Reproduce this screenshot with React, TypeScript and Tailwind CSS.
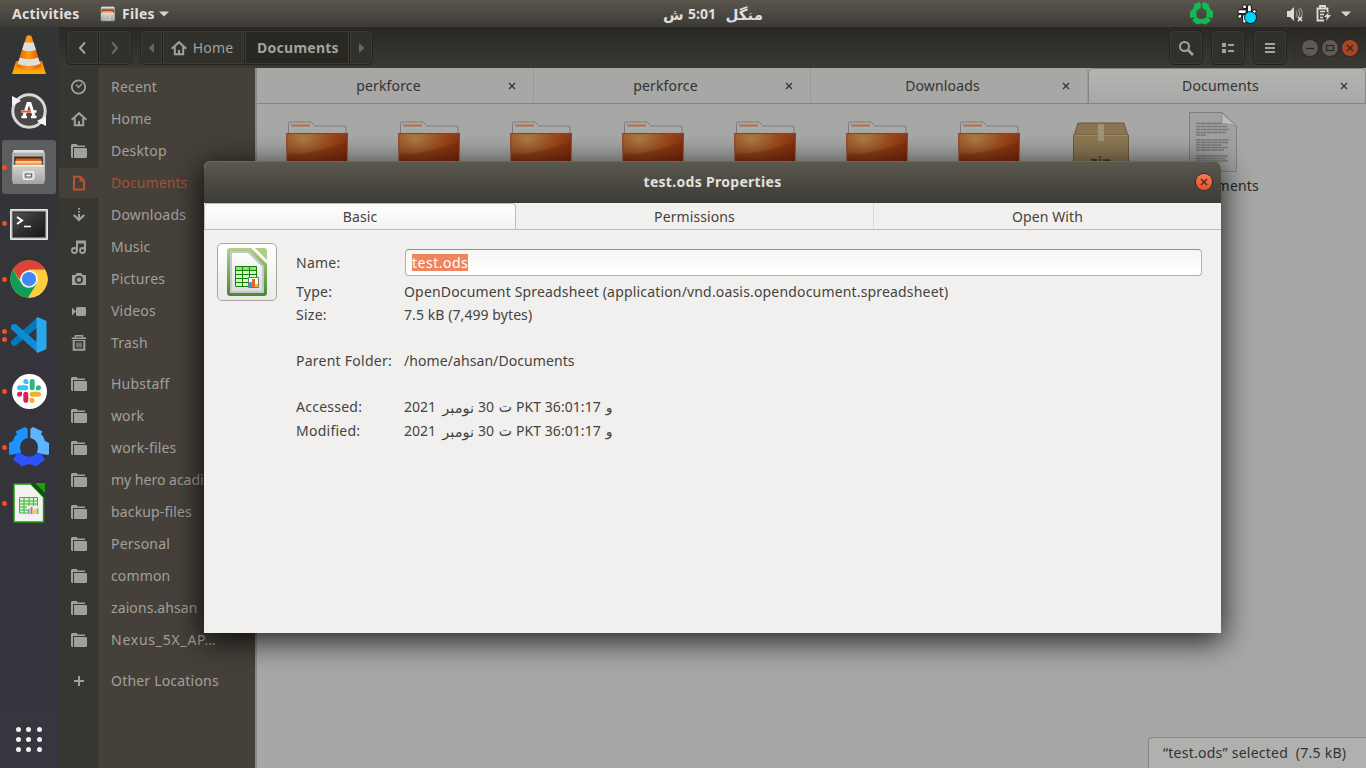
import React from 'react';

type P = { children?: React.ReactNode; className?: string };
const Svg = ({ w, h, vb, children, className = '' }: { w: number; h: number; vb?: string } & P) => (
  <svg width={w} height={h} viewBox={vb ?? `0 0 ${w} ${h}`} className={`block shrink-0 ${className}`}>{children}</svg>
);

const C = '#a0a09c';

const HomeIcon = () => (
  <Svg w={16} h={16}><path d="M.700 8.700 8 2.200l7.300 6.500M3.800 7v7.200h8.400V7" fill="none" stroke={C} strokeWidth="2" /><path d="M7 10h2v4H7z" fill={C} /></Svg>
);
const FolderIcon = () => (
  <Svg w={16} h={16}><path d="M0 2l1-1h4.500L7 2.500h7V4H2v11H1l-1-1z" fill={C} /><path d="M3 5h12l1 1v8l-1 1H3z" fill={C} /></Svg>
);
const sideIcons: Record<string, React.ReactNode> = {
  recent: <Svg w={16} h={16}><circle cx="7.500" cy="8" r="6.700" fill="none" stroke={C} strokeWidth="1.800" /><path d="M5 5.500 7.500 8.500 11 4.800" fill="none" stroke={C} strokeWidth="1.300" /></Svg>,
  home: <HomeIcon />,
  folder: <FolderIcon />,
  doc: <Svg w={16} h={16}><path d="M3 1.800h6L13 5.500v9H3z" fill="none" stroke="#b9532f" strokeWidth="2" /><path d="M8.500 1.500v5H13z" fill="#b9532f" /></Svg>,
  down: <Svg w={16} h={16}><path d="M7 1h2v1.500H7zM7 4h2v1.500H7zM7 7h2v6H7z" fill={C} /><path d="M2.800 8 8 13l5.200-5" fill="none" stroke={C} strokeWidth="2.300" /></Svg>,
  music: <Svg w={16} h={16}><path d="M6 12V2.500h8v8.500M6 3.500h8" fill="none" stroke={C} strokeWidth="2" /><circle cx="3.400" cy="11.500" r="2.500" fill="none" stroke={C} strokeWidth="1.800" /><circle cx="11.500" cy="11.500" r="2.500" fill="none" stroke={C} strokeWidth="1.800" /></Svg>,
  camera: <Svg w={16} h={16}><path d="M1 4h3.500l1-2h5l1 2H15v10H1z" fill={C} /><circle cx="8" cy="8.800" r="3.100" fill="none" stroke="#383630" strokeWidth="1.800" /></Svg>,
  video: <Svg w={16} h={16}><path d="M6 4h8l1 1v7l-1 1H6l-1-1V5zM1 4.500 5 8.500 1 12.500z" fill={C} /></Svg>,
  trash: <Svg w={16} h={16}><path d="M.700 3.200h14.600M4.500 2.500V.800h7v1.700" fill="none" stroke={C} strokeWidth="1.600" /><path d="M2.700 6v8.700h10.600V6" fill="none" stroke={C} strokeWidth="2" /><path d="M1.700 5.500h12.600M6 7.500v5M8 7.500v5M10 7.500v5" fill="none" stroke={C} strokeWidth="1.100" /></Svg>,
  plus: <Svg w={16} h={16}><path d="M8 3v10M3 8h10" stroke={C} strokeWidth="2" /></Svg>,
};

const Cabinet = ({ s }: { s: number }) => (
  <Svg w={s} h={s} vb="0 0 40 40">
    <defs><linearGradient id="cab" x2="0" y2="1"><stop stopColor="#d2d2d2" /><stop offset="1" stopColor="#a2a2a2" /></linearGradient></defs>
    <path d="M4 2h31l2 4v29H2V6z" fill="#b0b0b0" /><path d="M4 2h31l1 3H3z" fill="#dedede" />
    <path d="M4.500 9h30v10h-30z" fill="#3c2a22" /><path d="M6 11h27v3H6z" fill="#d8551e" /><path d="M5.500 13.500h28v5h-28z" fill="#f2a052" /><path d="M6 14h27v1.500H6z" fill="#ffe0ae" />
    <path d="M3 18h33v20H3z" fill="url(#cab)" /><path d="M3 18h33v1.500H3z" fill="#eee" />
    <rect x="14" y="25" width="11" height="8" rx="1.500" fill="#c9c9c9" stroke="#eee" strokeWidth="1.500" /><rect x="16.500" y="27.500" width="6" height="3" fill="#fff" stroke="#555" strokeWidth="1" />
  </Svg>
);
const Vlc = () => (
  <Svg w={36} h={42}>
    <defs><linearGradient id="vo" x2="1" y2="0"><stop stopColor="#e86a00" /><stop offset=".5" stopColor="#ff9a1a" /><stop offset="1" stopColor="#dd6000" /></linearGradient><linearGradient id="vb" x2="0" y2="1"><stop stopColor="#f07800" /><stop offset="1" stopColor="#ffb400" /></linearGradient></defs>
    <path d="M5 27h26l4 13H1z" fill="url(#vb)" />
    <path d="M15.500 2Q18 .500 20.500 2L30 33Q18 39 6 33z" fill="url(#vo)" />
    <path d="m13.300 8.500 9.400 0 2.300 7.500q-7 2.500-14 0z" fill="#dedede" /><path d="m8.700 23.500 18.600 0 2 6.500q-11.300 4-22.600 0z" fill="#dedede" />
    <path d="M11 16q7 2.500 14 0l2.300 7.500q-9.300 3.500-18.600 0z" fill="url(#vo)" />
  </Svg>
);
const Updater = () => (
  <Svg w={40} h={40}>
    <circle cx="20" cy="20" r="15" fill="#484743" /><circle cx="20" cy="20" r="16.200" fill="none" stroke="#d8d8d6" strokeWidth="3" />
    <path d="M3 5v10l9-5-3-2zM37 35V25l-9 5 3 2z" fill="#f4f4f4" />
    <path d="M15 25 19 12.500h2L25 25" fill="none" stroke="#fff" strokeWidth="3" /><path d="M12.500 20.500h15M12.500 26h5.500M22 26h5.500" stroke="#fff" strokeWidth="2.400" /><path d="M13 20.500h9" stroke="#e95420" strokeWidth="2" />
  </Svg>
);
const Terminal = () => (
  <Svg w={38} h={31} className="mt-[2px]">
    <defs><linearGradient id="tg" x2="1" y2="1"><stop stopColor="#555" /><stop offset=".5" stopColor="#303030" /><stop offset="1" stopColor="#161616" /></linearGradient></defs>
    <rect width="38" height="31" rx="1" fill="#e6e6e6" /><rect x="1" y="1" width="36" height="29" fill="#c6c6c6" /><rect x="3" y="3" width="32" height="25" fill="url(#tg)" stroke="#222" />
    <path d="m7 8 5 3.500-5 3.500" fill="none" stroke="#fff" strokeWidth="2" /><path d="M14 17.500h7" stroke="#fff" strokeWidth="1.600" />
  </Svg>
);
const Chrome = () => (
  <Svg w={38} h={38} vb="0 0 48 48">
    <circle cx="24" cy="24" r="23.500" fill="#fcc934" />
    <path d="M3.600 12.300A23.500 23.500 0 0 1 44.400 12.300H24L12 24z" fill="#db4437" />
    <path d="M3.600 12.300A23.500 23.500 0 0 0 23 47.500L34 30 24 34.500 14 29z" fill="#109d58" />
    <path d="M24 12.300h20.400A23.500 23.500 0 0 1 23 47.500L34.200 30z" fill="#fecd40" />
    <circle cx="24" cy="24" r="11" fill="#f4f4f4" /><circle cx="24" cy="24" r="9" fill="#4285f4" />
  </Svg>
);
const Code = () => (
  <Svg w={36} h={36}>
    <path d="M27 0 0 24v3l2 2 3-.500L28 9z" fill="#0877b9" /><path d="m0 12 0-3L2 7l3 .300L28 27l-1 9z" fill="#0a8dd6" /><path d="M27 .200 35.500 4v28L27 35.800 25.500 35V1z" fill="#2ba7ee" />
  </Svg>
);
const SlackMark = ({ s, mono = false }: { s: number; mono?: boolean }) => {
  const c = mono ? ['#fff', '#fff', '#fff', '#fff'] : ['#36c5f0', '#2eb67d', '#ecb22e', '#e01e5a'];
  return (
    <Svg w={s} h={s} vb="-1 -1 26 26">
      <g stroke={mono ? '#1c1c1a' : 'none'} strokeWidth="1.400">
        <path d="M8.800 0a2.500 2.500 0 0 0 0 5h2.500V2.500A2.500 2.500 0 0 0 8.800 0zM2.500 6.300h6.300a2.500 2.500 0 0 1 0 5H2.500a2.500 2.500 0 0 1 0-5z" fill={c[0]} />
        <path d="M24 8.800a2.500 2.500 0 0 0-5 0v2.500h2.500A2.500 2.500 0 0 0 24 8.800zM12.700 2.500v6.300a2.500 2.500 0 0 0 5 0V2.500a2.500 2.500 0 0 0-5 0z" fill={c[1]} />
        <path d="M15.200 24a2.500 2.500 0 0 0 0-5h-2.500v2.500a2.500 2.500 0 0 0 2.500 2.500zM21.500 12.700h-6.300a2.500 2.500 0 0 0 0 5h6.300a2.500 2.500 0 0 0 0-5z" fill={c[2]} />
        <path d="M0 15.200a2.500 2.500 0 0 0 5 0v-2.500H2.500A2.500 2.500 0 0 0 0 15.200zM6.300 15.200v6.300a2.500 2.500 0 0 0 5 0v-6.300a2.500 2.500 0 0 0-5 0z" fill={c[3]} />
      </g>
    </Svg>
  );
};
const Ring = ({ s, c }: { s: number; c: [string, string, string] }) => (
  <Svg w={s} h={s} vb="0 0 40 40">
    <path d="M16 0 18.700 2V11Q11 13 11 20.500L12 26 1 28 0 27V16L4 14Q5 9.500 8 7L6.500 4.500z" fill={c[0]} />
    <path d="M24 0 21.300 2V11Q29 13 29 20.500L28 26 39 28 40 27V16L36 14Q35 9.500 32 7L33.500 4.500z" fill={c[1]} />
    <path d="M8 26.500 12 26.500Q20 33 28 26.500L32 26.500 36 32.500 27 39.500 24 38Q20 36.500 16 38L13 39.500 4 32.500z" fill={c[2]} />
  </Svg>
);
const Calc = () => (
  <Svg w={34} h={40}>
    <path d="M2 1h17l12.500 13v25H2z" fill="#f2f2f2" stroke="#18a303" strokeWidth="1.400" /><path d="M23 0h10v10z" fill="#18a303" /><path d="m19.500 1 13 13" stroke="#0d5d05" strokeWidth="1.500" />
    <path d="M7 14h19v16H7z" fill="#d5f3cf" /><path d="M7.500 14.500h18V30h-18zM7 18h19M7 21h19M7 24h19M7 27h19M12 14v16M17 14v16M21.500 14v16" stroke="#43b434" fill="none" />
    <path d="M15 23h12v9H15z" fill="#eee" /><path d="M15.500 26h2v5h-2z" fill="#42a5e8" /><path d="M18.500 24h2v7h-2z" fill="#e66a45" /><path d="M21.500 26.500h2V31h-2z" fill="#f5c03c" /><path d="M24.500 25.500h2V31h-2z" fill="#77bd5c" />
  </Svg>
);
const SheetIcon = () => (
  <Svg w={40} h={48}>
    <defs><linearGradient id="sh" x2="0" y2="1"><stop stopColor="#b1d183" /><stop offset="1" stopColor="#458a2c" /></linearGradient><linearGradient id="sp" x2="0" y2="1"><stop stopColor="#fff" /><stop offset="1" stopColor="#dcdcdc" /></linearGradient></defs>
    <path d="M2 0H24L40 16V46l-2 2H2L0 46V2z" fill="url(#sh)" /><path d="M3 3H22L37 18V45H3z" fill="#c6c6ce" /><path d="M5 5H21L35 19V43H5z" fill="url(#sp)" />
    <path d="M28 0H38l2 2V12z" fill="#abcf80" />
    <path d="M8.500 18.500h21V38.500h-21z" fill="#ceffc4" /><path d="M9 19h20v4H9z" fill="#8fe086" /><path d="M8.500 18.500h21v20h-21zM8 22.500h22M8 26.500h22M8 30.500h22M8 34.500h22M15.500 18v21M22.500 18v21" stroke="#118200" fill="none" />
    <path d="M21.500 29.500h10v10h-10z" fill="#fff" stroke="#777" /><path d="M22 34h3v5h-3z" fill="#25a4e8" /><path d="M25 31h3v8h-3z" fill="#e06a26" /><path d="M28 36h3v3h-3z" fill="#f3c01a" />
  </Svg>
);
const BigFolder = () => (
  <Svg w={64} h={56}>
    <defs><radialGradient id="bf" cx=".28" cy=".12" r="1"><stop stopColor="#ad7e47" /><stop offset=".45" stopColor="#9b481b" /><stop offset="1" stopColor="#7e250c" /></radialGradient></defs>
    <path d="M2.500 12V2.500q0-1.500 1.500-1.500h21l4 4h30q1 0 1 1V14h-57.500z" fill="#a9a9a9" stroke="#7c7c7c" /><path d="M5 4.500h19" stroke="#b86a46" strokeWidth="2" />
    <path d="M.500 12.500h61L60.500 55H1.500z" fill="url(#bf)" stroke="#93401c" /><path d="M1 34Q40 30 61 20v34H1z" fill="#6d1d07" opacity=".3" />
  </Svg>
);
const Zip = () => (
  <Svg w={56} h={58}>
    <path d="M5 1h46l4 13H1z" fill="#8a7454" stroke="#705839" /><path d="M.500 13h55v45h-55z" fill="#8d7854" stroke="#705b3b" /><path d="M1 13.500h54" stroke="#a08a67" /><path d="M25 2h6v17h-6z" fill="#a39376" />
    <text x="28" y="45" textAnchor="middle" fontFamily="Noto Sans" fontWeight="700" fontSize="15" fill="#493b23">zip</text>
  </Svg>
);
const Paper = () => (
  <Svg w={48} h={60}>
    <path d="M.500.500H33L47.500 14V59.500H.500z" fill="#a1a1a1" stroke="#808080" /><path d="M33 1 47 14Q38 11 33 12z" fill="#bdbdbd" stroke="#8c8c8c" />
    <path d="M7 11.500h25M7 14.500h31M7 17.500h33M7 20.500h30M7 23h10M7 28h33M7 30.500h32M7 33h26M7 35.500h32M7 38h28M7 44h32M7 46.500h30M7 49h32" stroke="#777" strokeWidth="1.300" strokeDasharray="4 .4 6 .4" />
  </Svg>
);

const X = ({ c = '#343434' }: { c?: string }) => <Svg w={8} h={8}><path d="m1 1 6 6M7 1 1 7" stroke={c} strokeWidth="1.300" /></Svg>;

const dock: { icon: React.ReactNode; dots: number; active?: boolean }[] = [
  { icon: <Vlc />, dots: 0 }, { icon: <Updater />, dots: 0 }, { icon: <Cabinet s={38} />, dots: 1, active: true },
  { icon: <Terminal />, dots: 1 }, { icon: <Chrome />, dots: 1 }, { icon: <Code />, dots: 2 },
  { icon: <div className="flex h-[35px] w-[35px] items-center justify-center rounded-full bg-white"><SlackMark s={26} /></div>, dots: 1 },
  { icon: <Ring s={40} c={['#1e93ff', '#5cb6ff', '#2b53ff']} />, dots: 1 }, { icon: <Calc />, dots: 1 },
];
const places: [string, string][] = [
  ['recent', 'Recent'], ['home', 'Home'], ['folder', 'Desktop'], ['doc', 'Documents'],
  ['down', 'Downloads'], ['music', 'Music'], ['camera', 'Pictures'], ['video', 'Videos'], ['trash', 'Trash'],
];
const marks: [string, string][] = [
  ['Hubstaff', 'tracking-[0.2px]'], ['work', 'tracking-[0.1px]'], ['work-files', 'tracking-[0.15px]'], ['my hero acadi…', 'tracking-normal'], ['backup-files', 'tracking-[0.15px]'],
  ['Personal', 'tracking-[0.2px]'], ['common', 'tracking-[0.15px]'], ['zaions.ahsan', 'tracking-[0.1px]'], ['Nexus_5X_AP…', 'tracking-[0.75px]'],
];

const Place = ({ icon, text, active = false, track = 'tracking-[0.2px]' }: { icon: string; text: string; active?: boolean; track?: string }) => (
  <div className="flex h-8 shrink-0 items-center">
    <div className={`flex h-[30px] w-[39px] shrink-0 items-center justify-center ${active ? 'bg-[#45413a]' : ''}`}>{sideIcons[icon]}</div>
    <span className={`ml-[13px] whitespace-nowrap ${track} ${active ? 'text-[#a6512f]' : 'text-[#a1a09c]'}`}>{text}</span>
  </div>
);

const HeadBtn = ({ children, className = '' }: P) => (
  <div className={`flex h-[35px] items-center justify-center border border-[#24231f] bg-[#31302b] shadow-[inset_0_0_0_1px_#3c3a35] ${className}`}>{children}</div>
);

const Field = ({ label, children, className = '' }: { label: string } & P) => (
  <div className={`flex items-center tracking-[0.17px] ${className}`}><span className="w-[108px] shrink-0 whitespace-nowrap tracking-[0.25px]">{label}</span>{children}</div>
);
const Stamp = () => (
  <span className="flex items-center whitespace-pre tracking-normal"><bdi className="w-[37px]">2021</bdi><bdi className="w-[33px] text-right text-[14.5px]">نومبر</bdi><bdi className="ml-[4px]">30</bdi><bdi className="ml-[5px] w-[13px]">ت</bdi><bdi className="ml-[4px] tracking-[0.05px]">PKT 36:01:17</bdi><bdi className="ml-[5px]">و</bdi></span>
);

export default function App() {
  return (
    <div className="relative flex h-[768px] w-[1366px] flex-col overflow-hidden bg-[#a7a7a5] font-['Noto_Sans','DejaVu_Sans',sans-serif] text-[14px] leading-5">
      <header className="flex h-[27px] shrink-0 items-center bg-gradient-to-b from-[#5a564e] to-[#3d3b36] font-bold text-[#e0dedb]">
        <span className="ml-3 w-[88px] tracking-[0.25px]">Activities</span>
        <Cabinet s={16} />
        <span className="ml-[6px] tracking-[0.3px]">Files</span>
        <Svg w={10} h={6} className="ml-1"><path d="M0 .500h10L5 5.500z" fill="#d8d6d2" /></Svg>
        <div className="flex flex-1 items-center justify-center whitespace-pre pl-[67px] text-[15px]">
          <div className="flex items-center"><bdi className="w-[25px] text-left">ش</bdi><bdi className="w-[36px] text-[14px]">5:01</bdi><bdi className="w-[39px] text-right">منگل</bdi></div>
        </div>
        <Ring s={23} c={['#12b955', '#12b955', '#12b955']} />
        <div className="relative ml-[24px] mr-[29px] w-[20px]"><SlackMark s={20} mono /><span className="absolute left-[7px] top-[7px] h-[13px] w-[13px] rounded-full border border-[#111] bg-[#00d4fa]" /></div>
        <Svg w={18} h={16}><path d="M1 5h3l4-4v14l-4-4H1z" fill="#dcdad6" /><path d="M10 5q2 3 0 6M12 3q3.500 4.500 0 9M14 2q4 5 1 9" stroke="#8d8b86" strokeWidth="1.300" fill="none" /><path d="m12 11 4 4m0-4-4 4" stroke="#eee" strokeWidth="1.500" /></Svg>
        <Svg w={15} h={17} className="ml-[12px]"><path d="M8 15.500H1.500v-12h10V7M4 3V1h5v2" fill="none" stroke="#dedcd8" strokeWidth="1.800" /><path d="M4 6.500h5M4 9.500h4M4 12.500h3" stroke="#dedcd8" strokeWidth="1.300" /><path d="m13 7-5 5h3l-1 4 5-6h-3z" fill="#dedcd8" /></Svg>
        <Svg w={10} h={6} className="ml-[10px] mr-[15px]"><path d="M0 .500h10L5 5.500z" fill="#d8d6d2" /></Svg>
      </header>

      <div className="flex min-h-0 flex-1">
        <nav className="flex w-[59px] shrink-0 flex-col bg-gradient-to-b from-[#333436] to-[#37353f]">
          {dock.map((d, i) => (
            <div key={i} className="flex h-14 items-center">
              <div className="ml-[2px] flex w-0 flex-col gap-[3px]">{Array.from({ length: d.dots }, (_, k) => <i key={k} className="relative h-[5px] w-[5px] rounded-full bg-[#e95420]" />)}</div>
              <div className={`flex h-[54px] w-[54px] items-center justify-center rounded-[3px] ${d.active ? 'bg-[#5c5d5f]' : ''}`}>{d.icon}</div>
            </div>
          ))}
          <div className="mb-[16px] ml-4 mt-auto grid w-[26px] grid-cols-3 gap-[5px]">{Array.from({ length: 9 }, (_, i) => <i key={i} className="h-[5px] w-[5px] rounded-full bg-[#f2f2f0]" />)}</div>
        </nav>

        <section className="flex min-w-0 flex-1 flex-col">
          <div className="flex h-[41px] shrink-0 items-center bg-gradient-to-b from-[#292824] to-[#3b3933] text-[#a3a29d]">
            <HeadBtn className="ml-[7px] w-[33px] rounded-l-[5px] pr-[2px]"><Svg w={10} h={14}><path d="M8 1.500 3 7l5 5.500" fill="none" stroke="#a3a29d" strokeWidth="2" /></Svg></HeadBtn>
            <HeadBtn className="w-[33px] rounded-r-[5px] border-l-0"><Svg w={10} h={14}><path d="m2 1.500 5 5.500-5 5.500" fill="none" stroke="#6c6a65" strokeWidth="2" /></Svg></HeadBtn>
            <HeadBtn className="ml-[8px] w-[23px] rounded-l-[5px] pr-[2px]"><Svg w={6} h={10}><path d="M6 0v10L.500 5z" fill="#66645f" /></Svg></HeadBtn>
            <HeadBtn className="w-[82px] gap-[6px] border-l-0 pr-[3px]"><HomeIcon /><span className="tracking-[0.2px]">Home</span></HeadBtn>
            <HeadBtn className="w-[105px] border-l-0 bg-[#282722] pl-[2px] font-bold tracking-[0.25px]">Documents</HeadBtn>
            <HeadBtn className="w-[23px] rounded-r-[5px] border-l-0 pl-[2px]"><Svg w={6} h={10}><path d="M0 0v10l5.500-5z" fill="#66645f" /></Svg></HeadBtn>
            <div className="ml-auto flex items-center gap-[8px]">
              <HeadBtn className="w-[34px] rounded-[5px]"><Svg w={16} h={16}><circle cx="6.500" cy="6.500" r="4.500" fill="none" stroke="#a3a29d" strokeWidth="2" /><path d="m10 10 5 5" stroke="#a3a29d" strokeWidth="2.500" /></Svg></HeadBtn>
              <HeadBtn className="w-[34px] rounded-[5px]"><Svg w={14} h={10}><path d="M1 0h4v4H1zM1 6h4v4H1zM7 1h6v2H7zM7 7h6v2H7z" fill="#a3a29d" /></Svg></HeadBtn>
              <HeadBtn className="w-[34px] rounded-[5px]"><Svg w={10} h={10}><path d="M0 0h10v2H0zM0 4h10v2H0zM0 8h10v2H0z" fill="#a3a29d" /></Svg></HeadBtn>
            </div>
            <div className="ml-[7px] h-7 w-px bg-[#2d2c28]" />
            <div className="ml-[7px] mr-[8px] flex gap-1">
              {[<path key="a" d="M4 8.500h8" />, <path key="b" d="M4.500 5.500h7v5h-7z" />, <path key="c" d="m5 5 6 6m0-6-6 6" />].map((g, i) => (
                <div key={i} className={`flex h-4 w-4 items-center justify-center rounded-full ring-1 ring-[#2a2926] ${i === 2 ? 'bg-[#ab4420]' : 'bg-[#5c5a53]'}`}><Svg w={16} h={16}><g fill="none" stroke="#282622" strokeWidth="1.200">{g}</g></Svg></div>
              ))}
            </div>
          </div>

          <div className="flex min-h-0 flex-1">
            <aside className="flex w-[196px] shrink-0 flex-col overflow-hidden bg-[linear-gradient(to_right,#383630_38px,#302e2a_38px,#302e2a_39px,#45413a_39px)] pt-[3px]">
              {places.map(([ic, t]) => <Place key={t} icon={ic} text={t} active={ic === 'doc'} track={ic === 'doc' ? 'tracking-[0.1px]' : undefined} />)}
              <div className="h-[9px] shrink-0" />
              {marks.map(([t, k]) => <Place key={t} icon="folder" text={t} track={k} />)}
              <div className="h-[9px] shrink-0" />
              <Place icon="plus" text="Other Locations" />
            </aside>
            <main className="relative flex min-w-0 flex-1 flex-col border-l-2 border-[#8b8a88] bg-[#a7a7a5] text-[#333]">
              <div className="flex h-9 shrink-0 border-b border-[#858583]">
                {['perkforce', 'perkforce', 'Downloads', 'Documents'].map((t, i) => (
                  <div key={i} className={`flex flex-1 items-center border-r pl-[12px] pr-[17px] tracking-[0.15px] ${i === 3 ? 'rounded-t-[5px] border-l border-t border-[#858583] bg-gradient-to-b from-[#b4b4b3] to-[#a8a8a6]' : 'border-[#999997] pt-px'}`}>
                    <span className="flex-1 text-center">{t}</span><X />
                  </div>
                ))}
              </div>
              <div className="flex pl-[29px] pt-[8px]">
                {Array.from({ length: 7 }, (_, i) => <div key={i} className="w-[112px] shrink-0 pt-[9px]"><BigFolder /></div>)}
                <div className="w-[118px] shrink-0 pl-[3px] pt-[10px]"><Zip /></div>
                <div className="flex w-[71px] flex-col items-end"><div className="mr-[22px]"><Paper /></div><span className="mt-1 tracking-[0.2px] text-[#272727]">Documents</span></div>
              </div>
              <div className="absolute bottom-0 right-0 flex h-[31px] w-[218px] items-center whitespace-pre rounded-tl-[4px] border-l border-t border-[#858583] bg-[#b0b0af] pl-[14px] tracking-[0.25px]">“test.ods” selected  (7.5 kB)</div>
            </main>
          </div>
        </section>
      </div>

      <div role="dialog" className="absolute left-[204px] top-[161px] flex h-[472px] w-[1017px] flex-col overflow-visible rounded-t-[7px] bg-[#f1f0ee] text-[#454340] shadow-[0_6px_30px_2px_rgba(0,0,0,0.8)]">
        <div className="flex h-[42px] shrink-0 items-center rounded-t-[7px] bg-gradient-to-b from-[#5b584f] to-[#3d3b36] shadow-[inset_0_1px_0_#6b6860]">
          <span className="flex-1 pl-[25px] text-center font-bold tracking-[0.3px] text-[#e2e0dc]">test.ods Properties</span>
          <div className="mr-[9px] flex h-[16px] w-[16px] items-center justify-center rounded-full bg-gradient-to-b from-[#f37c58] to-[#e6501f] ring-1 ring-[#33302c]"><X c="#44251a" /></div>
        </div>
        <div className="flex h-[27px] shrink-0 border-b border-[#bfbdba] text-center leading-[27px] tracking-[0.1px]">
          <div className="w-[312px] rounded-t-[4px] border border-b-0 border-[#bfbdba] bg-gradient-to-b from-white to-[#f3f2f1] leading-[25px]">Basic</div>
          <div className="w-[358px] border-r border-[#dddbd8]">Permissions</div>
          <div className="flex-1">Open With</div>
        </div>
        <div className="flex pl-[13px] pt-[13px]">
          <div className="flex h-[58px] w-[60px] shrink-0 items-center justify-center rounded-[5px] border border-[#aaa7a3] bg-gradient-to-b from-white to-[#ebeae8]"><SheetIcon /></div>
          <div className="ml-[19px] flex flex-1 flex-col">
            <Field label="Name:" className="mt-[6px] h-[27px]">
              <div className="ml-[1px] flex h-[27px] w-[797px] items-center rounded-[4px] border border-[#b5b2ae] border-t-[#93908c] bg-gradient-to-b from-[#f6f6f5] to-white pl-[6px]"><span className="bg-[#f0845c] leading-[17px] tracking-[0.5px] text-white">test.ods</span></div>
            </Field>
            <Field label="Type:" className="mt-[4px] h-[23px]">OpenDocument Spreadsheet (application/vnd.oasis.opendocument.spreadsheet)</Field>
            <Field label="Size:" className="h-[23px]"><span className="tracking-[0.08px]">7.5 kB (7,499 bytes)</span></Field>
            <Field label="Parent Folder:" className="mt-[23px] h-[23px]"><span className="tracking-[0.08px]">/home/ahsan/Documents</span></Field>
            <Field label="Accessed:" className="mt-[23px] h-[23px]"><Stamp /></Field>
            <Field label="Modified:" className="mt-[1px] h-[23px]"><Stamp /></Field>
          </div>
        </div>
      </div>
    </div>
  );
}
